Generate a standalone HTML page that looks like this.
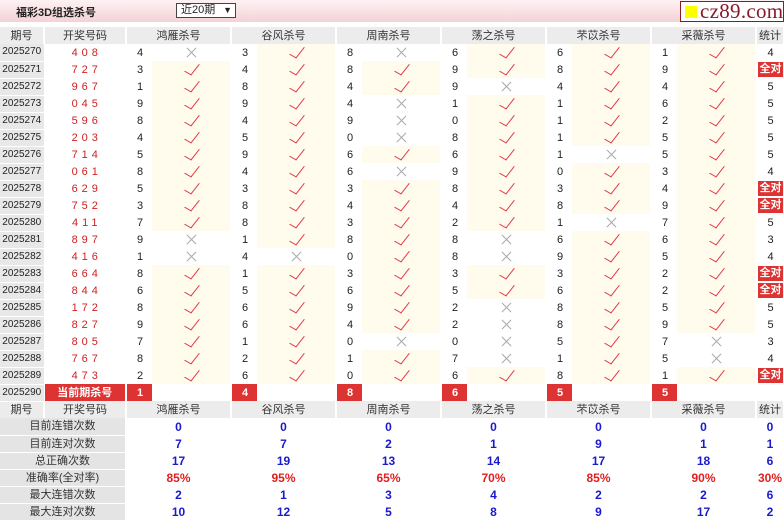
<!DOCTYPE html>
<html><head><meta charset="utf-8"><style>
*{margin:0;padding:0;box-sizing:border-box}
body{width:784px;height:521px;overflow:hidden;background:#fff;font-family:"Liberation Sans","Noto Sans CJK SC",sans-serif;font-size:11px;color:#222;position:relative}
.top{position:absolute;left:0;top:0;width:784px;height:22px;background:linear-gradient(#fdf2f3,#f4d2d6)}
.title{position:absolute;left:16px;top:4px;font-size:11px;font-weight:bold;color:#222}
.sel{position:absolute;left:176px;top:3px;width:60px;height:15px;border:1px solid #444;background:#fff;font-size:11px;line-height:13px;padding-left:4px}
.sel b{position:absolute;right:3px;top:0;font-size:9px}
.logo{position:absolute;left:680px;top:1px;width:104px;height:21px;border:1px solid #8a1a2a;background:#fff;font-family:"Liberation Serif",serif;font-size:21px;color:#8a1a2a;line-height:18px;padding-left:19px;letter-spacing:0.3px}
.logo i{position:absolute;left:4px;top:4px;width:12px;height:12px;background:#ffff00}
table{position:absolute;left:0;top:27px;border-collapse:collapse;table-layout:fixed;width:784px}
td{height:17px;padding:0;text-align:center;white-space:nowrap;overflow:hidden;line-height:16px}
.p{background:#e8e8e8;border-bottom:1px solid #fff;border-right:1px solid #fff;font-size:10px}
.h td{background:#ececec;border-right:2px solid #fff;color:#333}
.k{color:#d02020;letter-spacing:4px;padding-left:4px;border-right:2px solid #fff}
.n{text-align:left;padding-left:10px}
.m{border-right:2px solid #fff;position:relative;font-size:0}
.y{background:#fffcee}
.y::before{content:"";position:absolute;left:50%;top:0px;width:7px;height:13px;margin-left:-3px;border:solid #e03a48;border-width:0 1.6px 1.6px 0;transform:rotate(38deg) skewY(-8deg)}
.x::before,.x::after{content:"";position:absolute;left:50%;top:8px;width:13px;height:1px;margin-left:-6px;background:#aaa;transform:rotate(45deg)}
.x::after{transform:rotate(-45deg)}
.qd span{display:block;background:#d33;color:#fff;font-weight:bold;margin:1px 1px;line-height:15px}
.cr td.r{background:#d33;color:#fff;font-weight:bold}
.lb{background:#e4e4e4;border-bottom:1px solid #fff;border-right:2px solid #fff;color:#333}
.v{color:#1a1acc;font-weight:bold;font-size:12px;border-right:2px solid #fff}
.v.pc{color:#e02020}
</style></head><body>
<div class="top"></div>
<div class="title">福彩3D组选杀号</div>
<div class="sel">近20期<b>▼</b></div>
<div class="logo"><i></i>cz89.com</div>
<table>
<colgroup><col style="width:44px"><col style="width:82px">
<col style="width:26px"><col style="width:79px"><col style="width:26px"><col style="width:79px"><col style="width:26px"><col style="width:79px"><col style="width:26px"><col style="width:79px"><col style="width:26px"><col style="width:79px"><col style="width:26px"><col style="width:79px"><col style="width:28px"></colgroup>
<tr class="h"><td>期号</td><td>开奖号码</td><td colspan="2">鸿雁杀号</td><td colspan="2">谷风杀号</td><td colspan="2">周南杀号</td><td colspan="2">荡之杀号</td><td colspan="2">芣苡杀号</td><td colspan="2">采薇杀号</td><td>统计</td></tr>
<tr><td class="p">2025270</td><td class="k">408</td><td class="n">4</td><td class="m x">✕</td><td class="n">3</td><td class="m y">✓</td><td class="n">8</td><td class="m x">✕</td><td class="n">6</td><td class="m y">✓</td><td class="n">6</td><td class="m y">✓</td><td class="n">1</td><td class="m y">✓</td><td>4</td></tr>
<tr><td class="p">2025271</td><td class="k">727</td><td class="n">3</td><td class="m y">✓</td><td class="n">4</td><td class="m y">✓</td><td class="n">8</td><td class="m y">✓</td><td class="n">9</td><td class="m y">✓</td><td class="n">8</td><td class="m y">✓</td><td class="n">9</td><td class="m y">✓</td><td class="qd"><span>全对</span></td></tr>
<tr><td class="p">2025272</td><td class="k">967</td><td class="n">1</td><td class="m y">✓</td><td class="n">8</td><td class="m y">✓</td><td class="n">4</td><td class="m y">✓</td><td class="n">9</td><td class="m x">✕</td><td class="n">4</td><td class="m y">✓</td><td class="n">4</td><td class="m y">✓</td><td>5</td></tr>
<tr><td class="p">2025273</td><td class="k">045</td><td class="n">9</td><td class="m y">✓</td><td class="n">9</td><td class="m y">✓</td><td class="n">4</td><td class="m x">✕</td><td class="n">1</td><td class="m y">✓</td><td class="n">1</td><td class="m y">✓</td><td class="n">6</td><td class="m y">✓</td><td>5</td></tr>
<tr><td class="p">2025274</td><td class="k">596</td><td class="n">8</td><td class="m y">✓</td><td class="n">4</td><td class="m y">✓</td><td class="n">9</td><td class="m x">✕</td><td class="n">0</td><td class="m y">✓</td><td class="n">1</td><td class="m y">✓</td><td class="n">2</td><td class="m y">✓</td><td>5</td></tr>
<tr><td class="p">2025275</td><td class="k">203</td><td class="n">4</td><td class="m y">✓</td><td class="n">5</td><td class="m y">✓</td><td class="n">0</td><td class="m x">✕</td><td class="n">8</td><td class="m y">✓</td><td class="n">1</td><td class="m y">✓</td><td class="n">5</td><td class="m y">✓</td><td>5</td></tr>
<tr><td class="p">2025276</td><td class="k">714</td><td class="n">5</td><td class="m y">✓</td><td class="n">9</td><td class="m y">✓</td><td class="n">6</td><td class="m y">✓</td><td class="n">6</td><td class="m y">✓</td><td class="n">1</td><td class="m x">✕</td><td class="n">5</td><td class="m y">✓</td><td>5</td></tr>
<tr><td class="p">2025277</td><td class="k">061</td><td class="n">8</td><td class="m y">✓</td><td class="n">4</td><td class="m y">✓</td><td class="n">6</td><td class="m x">✕</td><td class="n">9</td><td class="m y">✓</td><td class="n">0</td><td class="m y">✓</td><td class="n">3</td><td class="m y">✓</td><td>4</td></tr>
<tr><td class="p">2025278</td><td class="k">629</td><td class="n">5</td><td class="m y">✓</td><td class="n">3</td><td class="m y">✓</td><td class="n">3</td><td class="m y">✓</td><td class="n">8</td><td class="m y">✓</td><td class="n">3</td><td class="m y">✓</td><td class="n">4</td><td class="m y">✓</td><td class="qd"><span>全对</span></td></tr>
<tr><td class="p">2025279</td><td class="k">752</td><td class="n">3</td><td class="m y">✓</td><td class="n">8</td><td class="m y">✓</td><td class="n">4</td><td class="m y">✓</td><td class="n">4</td><td class="m y">✓</td><td class="n">8</td><td class="m y">✓</td><td class="n">9</td><td class="m y">✓</td><td class="qd"><span>全对</span></td></tr>
<tr><td class="p">2025280</td><td class="k">411</td><td class="n">7</td><td class="m y">✓</td><td class="n">8</td><td class="m y">✓</td><td class="n">3</td><td class="m y">✓</td><td class="n">2</td><td class="m y">✓</td><td class="n">1</td><td class="m x">✕</td><td class="n">7</td><td class="m y">✓</td><td>5</td></tr>
<tr><td class="p">2025281</td><td class="k">897</td><td class="n">9</td><td class="m x">✕</td><td class="n">1</td><td class="m y">✓</td><td class="n">8</td><td class="m y">✓</td><td class="n">8</td><td class="m x">✕</td><td class="n">6</td><td class="m y">✓</td><td class="n">6</td><td class="m y">✓</td><td>3</td></tr>
<tr><td class="p">2025282</td><td class="k">416</td><td class="n">1</td><td class="m x">✕</td><td class="n">4</td><td class="m x">✕</td><td class="n">0</td><td class="m y">✓</td><td class="n">8</td><td class="m x">✕</td><td class="n">9</td><td class="m y">✓</td><td class="n">5</td><td class="m y">✓</td><td>4</td></tr>
<tr><td class="p">2025283</td><td class="k">664</td><td class="n">8</td><td class="m y">✓</td><td class="n">1</td><td class="m y">✓</td><td class="n">3</td><td class="m y">✓</td><td class="n">3</td><td class="m y">✓</td><td class="n">3</td><td class="m y">✓</td><td class="n">2</td><td class="m y">✓</td><td class="qd"><span>全对</span></td></tr>
<tr><td class="p">2025284</td><td class="k">844</td><td class="n">6</td><td class="m y">✓</td><td class="n">5</td><td class="m y">✓</td><td class="n">6</td><td class="m y">✓</td><td class="n">5</td><td class="m y">✓</td><td class="n">6</td><td class="m y">✓</td><td class="n">2</td><td class="m y">✓</td><td class="qd"><span>全对</span></td></tr>
<tr><td class="p">2025285</td><td class="k">172</td><td class="n">8</td><td class="m y">✓</td><td class="n">6</td><td class="m y">✓</td><td class="n">9</td><td class="m y">✓</td><td class="n">2</td><td class="m x">✕</td><td class="n">8</td><td class="m y">✓</td><td class="n">5</td><td class="m y">✓</td><td>5</td></tr>
<tr><td class="p">2025286</td><td class="k">827</td><td class="n">9</td><td class="m y">✓</td><td class="n">6</td><td class="m y">✓</td><td class="n">4</td><td class="m y">✓</td><td class="n">2</td><td class="m x">✕</td><td class="n">8</td><td class="m y">✓</td><td class="n">9</td><td class="m y">✓</td><td>5</td></tr>
<tr><td class="p">2025287</td><td class="k">805</td><td class="n">7</td><td class="m y">✓</td><td class="n">1</td><td class="m y">✓</td><td class="n">0</td><td class="m x">✕</td><td class="n">0</td><td class="m x">✕</td><td class="n">5</td><td class="m y">✓</td><td class="n">7</td><td class="m x">✕</td><td>3</td></tr>
<tr><td class="p">2025288</td><td class="k">767</td><td class="n">8</td><td class="m y">✓</td><td class="n">2</td><td class="m y">✓</td><td class="n">1</td><td class="m y">✓</td><td class="n">7</td><td class="m x">✕</td><td class="n">1</td><td class="m y">✓</td><td class="n">5</td><td class="m x">✕</td><td>4</td></tr>
<tr><td class="p">2025289</td><td class="k">473</td><td class="n">2</td><td class="m y">✓</td><td class="n">6</td><td class="m y">✓</td><td class="n">0</td><td class="m y">✓</td><td class="n">6</td><td class="m y">✓</td><td class="n">8</td><td class="m y">✓</td><td class="n">1</td><td class="m y">✓</td><td class="qd"><span>全对</span></td></tr>
<tr class="cr"><td class="p">2025290</td><td class="r" style="border-right:2px solid #fff">当前期杀号</td><td class="n r">1</td><td class="m"></td><td class="n r">4</td><td class="m"></td><td class="n r">8</td><td class="m"></td><td class="n r">6</td><td class="m"></td><td class="n r">5</td><td class="m"></td><td class="n r">5</td><td class="m"></td><td></td></tr>
<tr class="h"><td>期号</td><td>开奖号码</td><td colspan="2">鸿雁杀号</td><td colspan="2">谷风杀号</td><td colspan="2">周南杀号</td><td colspan="2">荡之杀号</td><td colspan="2">芣苡杀号</td><td colspan="2">采薇杀号</td><td>统计</td></tr>
<tr><td colspan="2" class="lb">目前连错次数</td><td colspan="2" class="v">0</td><td colspan="2" class="v">0</td><td colspan="2" class="v">0</td><td colspan="2" class="v">0</td><td colspan="2" class="v">0</td><td colspan="2" class="v">0</td><td class="v">0</td></tr>
<tr><td colspan="2" class="lb">目前连对次数</td><td colspan="2" class="v">7</td><td colspan="2" class="v">7</td><td colspan="2" class="v">2</td><td colspan="2" class="v">1</td><td colspan="2" class="v">9</td><td colspan="2" class="v">1</td><td class="v">1</td></tr>
<tr><td colspan="2" class="lb">总正确次数</td><td colspan="2" class="v">17</td><td colspan="2" class="v">19</td><td colspan="2" class="v">13</td><td colspan="2" class="v">14</td><td colspan="2" class="v">17</td><td colspan="2" class="v">18</td><td class="v">6</td></tr>
<tr><td colspan="2" class="lb">准确率(全对率)</td><td colspan="2" class="v pc">85%</td><td colspan="2" class="v pc">95%</td><td colspan="2" class="v pc">65%</td><td colspan="2" class="v pc">70%</td><td colspan="2" class="v pc">85%</td><td colspan="2" class="v pc">90%</td><td class="v pc">30%</td></tr>
<tr><td colspan="2" class="lb">最大连错次数</td><td colspan="2" class="v">2</td><td colspan="2" class="v">1</td><td colspan="2" class="v">3</td><td colspan="2" class="v">4</td><td colspan="2" class="v">2</td><td colspan="2" class="v">2</td><td class="v">6</td></tr>
<tr><td colspan="2" class="lb">最大连对次数</td><td colspan="2" class="v">10</td><td colspan="2" class="v">12</td><td colspan="2" class="v">5</td><td colspan="2" class="v">8</td><td colspan="2" class="v">9</td><td colspan="2" class="v">17</td><td class="v">2</td></tr>
</table>
</body></html>
